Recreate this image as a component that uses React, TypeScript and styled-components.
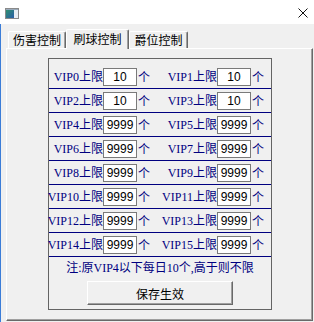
import React from "react";
import styled, { createGlobalStyle } from "styled-components";

const GlobalStyle = createGlobalStyle`
  html, body {
    margin: 0;
    padding: 0;
    background: #f0f0f0;
  }
  body {
    width: 314px;
    height: 322px;
    overflow: hidden;
    font-family: "Noto Sans CJK SC", sans-serif;
    font-size: 12px;
  }
`;

const Window = styled.div`
  width: 314px;
  height: 322px;
  display: flex;
  flex-direction: column;
  background: #f0f0f0;
`;

const TitleBar = styled.div`
  height: 24px;
  flex: none;
  background: #fff;
  display: flex;
  align-items: flex-start;
  justify-content: space-between;
  padding: 8px 6px 0 5px;
  box-sizing: border-box;
`;

const Content = styled.div`
  flex: 1;
  border-left: 1px solid #3b7dd8;
  padding-left: 5px;
  display: flex;
  flex-direction: column;
`;

const TabStrip = styled.div`
  height: 24px;
  display: flex;
  align-items: flex-end;
  padding-left: 2px;
`;

const Tab = styled.div<{ $active?: boolean; $w: number }>`
  position: relative;
  z-index: ${(p) => (p.$active ? 2 : 1)};
  width: ${(p) => p.$w}px;
  height: ${(p) => (p.$active ? 20 : 17)}px;
  margin-bottom: ${(p) => (p.$active ? -1 : 0)}px;
  box-sizing: border-box;
  background: #f0f0f0;
  border-top: 1px solid #fff;
  border-left: 1px solid #fff;
  border-right: 1px solid #696969;
  border-radius: 2px 2px 0 0;
  box-shadow: inset -1px 0 0 #a0a0a0;
  display: flex;
  align-items: center;
  justify-content: center;
  padding-bottom: ${(p) => (p.$active ? 2 : 0)}px;
  font-size: 12px;
  line-height: 14px;
  color: #000;
  white-space: nowrap;
`;

const Panel = styled.div`
  width: 307px;
  height: 273px;
  box-sizing: border-box;
  border-top: 1px solid #fff;
  border-left: 1px solid #fff;
  border-right: 1px solid #696969;
  border-bottom: 1px solid #696969;
  box-shadow: inset -1px -1px 0 #a0a0a0;
  padding: 9px 0 0 41px;
`;

const GroupBox = styled.div`
  width: 224px;
  height: 252px;
  box-sizing: border-box;
  border: 1px solid #646464;
  padding-top: 6px;
  display: flex;
  flex-direction: column;
`;

const Row = styled.div`
  height: 24px;
  box-sizing: border-box;
  border-bottom: 1px solid #000080;
  padding-top: 3px;
  display: grid;
  grid-template-columns: 114px 1fr;
`;

const Cell = styled.div`
  height: 18px;
  display: flex;
  align-items: center;
`;

const Label = styled.span`
  width: 54px;
  display: flex;
  justify-content: flex-end;
  white-space: nowrap;
  color: #000080;
  font-family: "Liberation Serif", "Noto Sans CJK SC", serif;
  font-size: 12px;
  line-height: 14px;
`;

const Field = styled.input`
  width: 34px;
  height: 18px;
  box-sizing: border-box;
  margin: 0;
  padding: 0;
  border: 1px solid #7a7a7a;
  background: #fff;
  color: #000;
  font-family: "Liberation Sans", Arial, sans-serif;
  font-size: 12px;
  text-align: center;
  outline: none;
`;

const Unit = styled.span`
  margin-left: 1px;
  color: #000080;
  font-size: 12px;
  line-height: 14px;
`;

const Note = styled.div`
  margin-top: 4px;
  text-align: center;
  color: #000080;
  font-family: "Liberation Serif", "Noto Sans CJK SC", serif;
  font-size: 12px;
  line-height: 14px;
  white-space: nowrap;
`;

const SaveButton = styled.button`
  width: 146px;
  height: 24px;
  margin: 6px auto 0;
  padding: 0;
  box-sizing: border-box;
  background: #f0f0f0;
  border-top: 1px solid #fff;
  border-left: 1px solid #fff;
  border-right: 1px solid #696969;
  border-bottom: 1px solid #696969;
  box-shadow: inset -1px -1px 0 #a0a0a0;
  font-family: "Noto Sans CJK SC", sans-serif;
  font-size: 12px;
  color: #000;
`;

const limits = [
  "10", "10", "10", "10",
  "9999", "9999", "9999", "9999", "9999", "9999",
  "9999", "9999", "9999", "9999", "9999", "9999",
];

function AppIcon() {
  return (
    <svg width="14" height="11" viewBox="0 0 14 11">
      <defs>
        <linearGradient id="ig" x1="0" y1="0" x2="1" y2="1">
          <stop offset="0" stopColor="#2f8f6f" />
          <stop offset="1" stopColor="#2a5ea8" />
        </linearGradient>
      </defs>
      <rect x="0.5" y="0.5" width="13" height="10" fill="#e8eef4" stroke="#8a8a8a" />
      <rect x="1" y="2" width="8" height="8" fill="url(#ig)" />
      <rect x="1" y="1" width="12" height="1" fill="#9ab" />
    </svg>
  );
}

function CloseIcon() {
  return (
    <svg width="10" height="10" viewBox="0 0 10 10">
      <path d="M0.5 0.5 L9.5 9.5 M9.5 0.5 L0.5 9.5" stroke="#111" strokeWidth="1" />
    </svg>
  );
}

export default function App() {
  const rows = [];
  for (let r = 0; r < 8; r++) {
    rows.push(
      <Row key={r}>
        {[0, 1].map((c) => {
          const n = r * 2 + c;
          return (
            <Cell key={c}>
              <Label>VIP{n}上限</Label>
              <Field defaultValue={limits[n]} readOnly />
              <Unit>个</Unit>
            </Cell>
          );
        })}
      </Row>
    );
  }

  return (
    <Window>
      <GlobalStyle />
      <TitleBar>
        <AppIcon />
        <CloseIcon />
      </TitleBar>
      <Content>
        <TabStrip>
          <Tab $w={58}>伤害控制</Tab>
          <Tab $w={63} $active>刷球控制</Tab>
          <Tab $w={59}>爵位控制</Tab>
        </TabStrip>
        <Panel>
          <GroupBox>
            {rows}
            <Note>注:原VIP4以下每日10个,高于则不限</Note>
            <SaveButton>保存生效</SaveButton>
          </GroupBox>
        </Panel>
      </Content>
    </Window>
  );
}
